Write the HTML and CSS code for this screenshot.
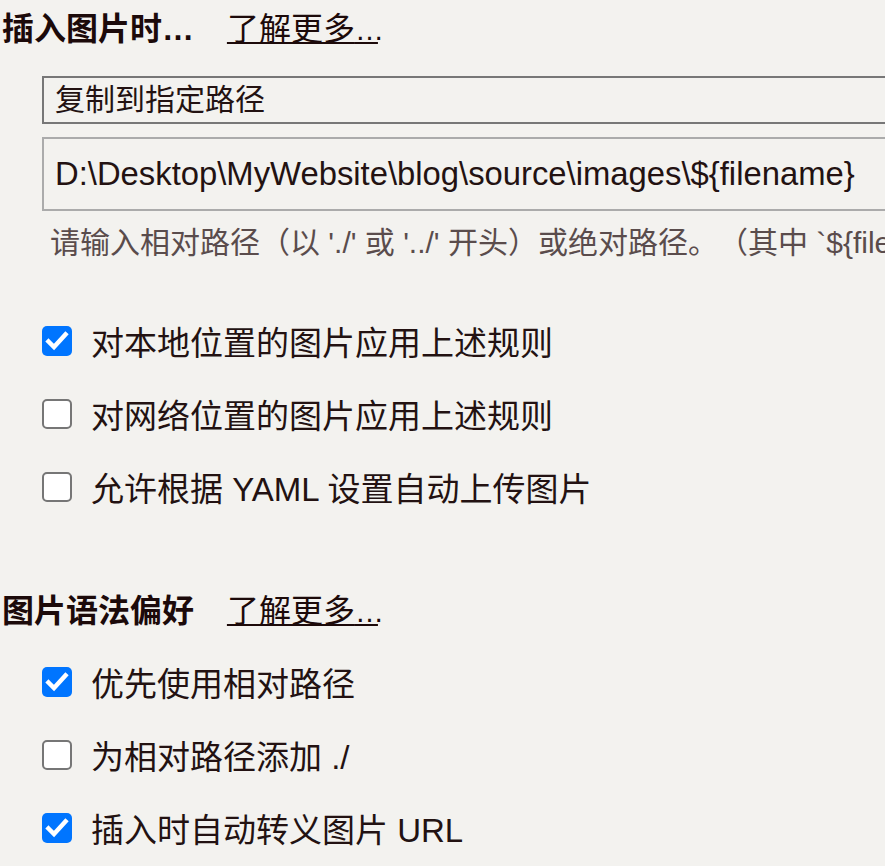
FILE: index.html
```html
<!DOCTYPE html>
<html lang="zh-CN">
<head>
<meta charset="utf-8">
<title>图片设置</title>
<link rel="stylesheet" href="styles.css">
</head>
<body>
<div class="page">
  <section class="group">
    <h2 class="group-title">插入图片时… <a class="learn" href="#">了解更多<span class="ell">…</span></a></h2>
    <div class="group-body">
      <div class="select">复制到指定路径</div>
      <div class="input">D:\Desktop\MyWebsite\blog\source\images\${filename}</div>
      <p class="hint">请输入相对路径（以 './' 或 '../' 开头）或绝对路径。（其中 `${filename}` 代表当前文件名）</p>
      <ul class="options options-first">
        <li class="option"><span class="cb checked"><svg viewBox="0 0 30 30"><path d="M6.5 15.5l5.5 5.5L23.5 8.5"/></svg></span>对本地位置的图片应用上述规则</li>
        <li class="option"><span class="cb"></span>对网络位置的图片应用上述规则</li>
        <li class="option"><span class="cb"></span>允许根据 YAML 设置自动上传图片</li>
      </ul>
    </div>
  </section>
  <section class="group group-second">
    <h2 class="group-title">图片语法偏好 <a class="learn" href="#">了解更多<span class="ell">…</span></a></h2>
    <div class="group-body">
      <ul class="options">
        <li class="option"><span class="cb checked"><svg viewBox="0 0 30 30"><path d="M6.5 15.5l5.5 5.5L23.5 8.5"/></svg></span>优先使用相对路径</li>
        <li class="option"><span class="cb"></span>为相对路径添加 ./</li>
        <li class="option"><span class="cb checked"><svg viewBox="0 0 30 30"><path d="M6.5 15.5l5.5 5.5L23.5 8.5"/></svg></span>插入时自动转义图片 URL</li>
      </ul>
    </div>
  </section>
</div>
</body>
</html>
```
FILE: styles.css
```css
html, body {
  margin: 0;
  padding: 0;
  background: #f3f2ef;
  overflow: hidden;
}
body {
  font-family: "Liberation Sans", "Noto Sans CJK SC", sans-serif;
  color: #231212;
  width: 885px;
  height: 866px;
  text-spacing-trim: space-all;
}
.page {
  padding: 9px 0 0 2px;
}
.group-title {
  margin: 0;
  font-size: 32px;
  line-height: 40px;
  font-weight: 700;
  color: #1c0a0a;
  white-space: nowrap;
}
.learn {
  margin-left: 24px;
  font-weight: 400;
  color: #1c0a0a;
  text-decoration: underline;
  text-decoration-thickness: 2px;
  text-underline-offset: 2px;
}
.ell {
  font-size: 29px;
  line-height: 1;
  letter-spacing: -6px;
}
.group-body {
  padding-left: 40px;
}
.select {
  margin-top: 27px;
  box-sizing: border-box;
  width: 1000px;
  height: 48px;
  border: 2px solid #777;
  padding: 0 11px;
  font-size: 30px;
  line-height: 44px;
  white-space: nowrap;
}
.input {
  margin-top: 13px;
  box-sizing: border-box;
  width: 1000px;
  height: 74px;
  border: 2px solid #ababab;
  padding: 0 11px;
  font-size: 32.8px;
  line-height: 70px;
  white-space: nowrap;
}
.hint {
  margin: 14px 0 0;
  padding-left: 8px;
  font-size: 30px;
  line-height: 36px;
  color: #5a4c4c;
  white-space: nowrap;
}
.options {
  list-style: none;
  margin: 0;
  padding: 0;
}
.options-first {
  margin-top: 43px;
}
.group-second {
  margin-top: 68px;
}
.group-second .options {
  margin-top: 14px;
}
.option {
  display: flex;
  align-items: center;
  gap: 19px;
  height: 73px;
  font-size: 33px;
  white-space: nowrap;
}
.cb {
  box-sizing: border-box;
  flex: none;
  width: 30px;
  height: 30px;
  border: 2px solid #767676;
  border-radius: 5px;
  background: #fff;
  display: flex;
}
.cb.checked {
  border: 0;
  background: #0075ff;
}
.cb svg {
  width: 30px;
  height: 30px;
}
.cb path {
  fill: none;
  stroke: #fff;
  stroke-width: 4.5;
  stroke-linecap: square;
  stroke-linejoin: miter;
}
```
